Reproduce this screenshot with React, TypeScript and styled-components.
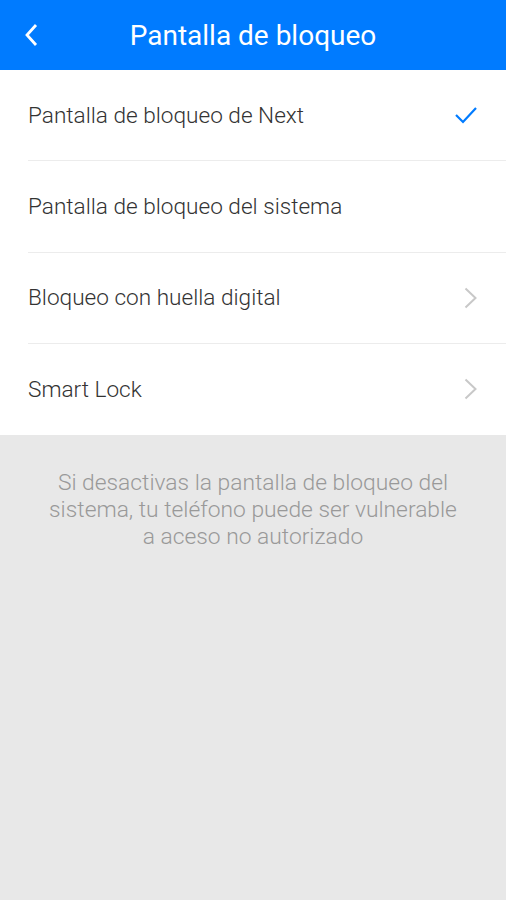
import React from 'react';
import styled, { createGlobalStyle } from 'styled-components';

const GlobalStyle = createGlobalStyle`
  html, body {
    margin: 0;
    padding: 0;
    background: #e8e8e8;
    font-family: Roboto, "Noto Sans", sans-serif;
  }
`;

const Page = styled.div`
  width: 506px;
  min-height: 900px;
  background: #e8e8e8;
`;

const Header = styled.header`
  height: 70px;
  background: #007bff;
  display: flex;
  align-items: center;
  position: relative;
`;

const BackButton = styled.button`
  position: absolute;
  left: 18px;
  top: 21px;
  width: 28px;
  height: 28px;
  border: none;
  background: none;
  padding: 0;
  display: flex;
  align-items: center;
  justify-content: center;
`;

const Title = styled.h1`
  flex: 1;
  margin: 0;
  text-align: center;
  color: #fff;
  font-size: 28px;
  font-weight: 400;
`;

const List = styled.ul`
  list-style: none;
  margin: 0;
  padding: 0 0 0 28px;
  background: #fff;
`;

const Row = styled.li<{ $last?: boolean }>`
  height: 91.25px;
  display: flex;
  align-items: center;
  justify-content: space-between;
  padding-right: 28px;
  border-bottom: ${(p) => (p.$last ? 'none' : '1px solid #ececec')};
  box-sizing: border-box;
`;

const Label = styled.span`
  font-size: 22.6px;
  color: #333;
  font-weight: 300;
`;

const Note = styled.p`
  margin: 0;
  padding: 34px 44px 0;
  text-align: center;
  font-size: 22.8px;
  line-height: 27px;
  color: #999;
  font-weight: 300;
`;

const Check = () => (
  <svg width="24" height="20" viewBox="0 0 24 20">
    <path d="M2 10 L9 17 L22 3" fill="none" stroke="#007bff" strokeWidth="2.2" />
  </svg>
);

const Chevron = () => (
  <svg width="14" height="22" viewBox="0 0 14 22">
    <path d="M1.5 1.5 L11.5 11 L1.5 20.5" fill="none" stroke="#c8c8c8" strokeWidth="2" />
  </svg>
);

const rows = [
  { name: 'Pantalla de bloqueo de Next', icon: 'check' },
  { name: 'Pantalla de bloqueo del sistema', icon: null },
  { name: 'Bloqueo con huella digital', icon: 'chevron' },
  { name: 'Smart Lock', icon: 'chevron' },
];

const App: React.FC = () => (
  <Page>
    <GlobalStyle />
    <Header>
      <BackButton aria-label="back">
        <svg width="16" height="24" viewBox="0 0 16 24">
          <path d="M12 2 L3 12 L12 22" fill="none" stroke="#fff" strokeWidth="2.8" />
        </svg>
      </BackButton>
      <Title>Pantalla de bloqueo</Title>
    </Header>
    <List>
      {rows.map(({ name, icon }, index) => (
        <Row key={index} $last={index === rows.length - 1}>
          <Label>{name}</Label>
          {icon === 'check' && <Check />}
          {icon === 'chevron' && <Chevron />}
        </Row>
      ))}
    </List>
    <Note>
      Si desactivas la pantalla de bloqueo del sistema, tu teléfono puede ser vulnerable a aceso no
      autorizado
    </Note>
  </Page>
);

export default App;
